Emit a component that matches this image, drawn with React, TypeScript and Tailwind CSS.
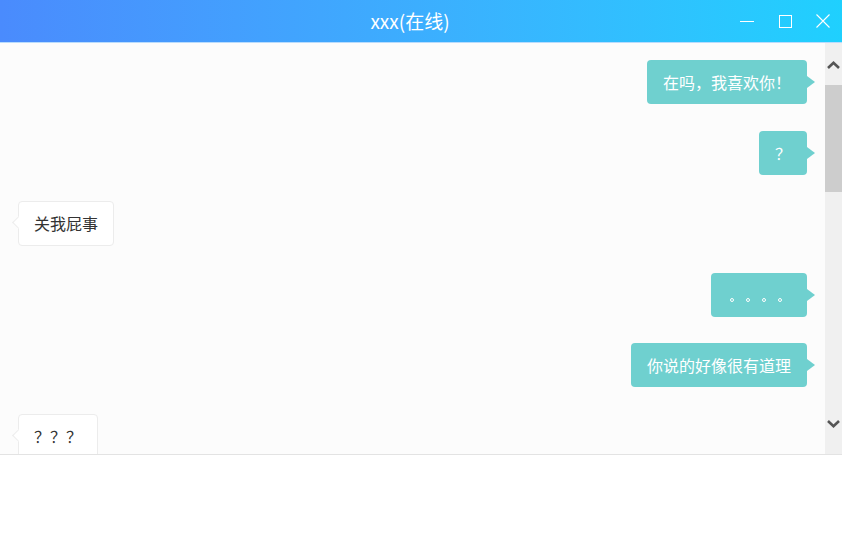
import React from "react";

type Msg = { me: boolean; text: string };

const messages: Msg[] = [
  { me: true, text: "在吗，我喜欢你！" },
  { me: true, text: "？" },
  { me: false, text: "关我屁事" },
  { me: true, text: "dots" },
  { me: true, text: "你说的好像很有道理" },
  { me: false, text: "？？？" },
];

const Dots = () => (
  <span className="flex h-full items-center">
    {[0, 1, 2, 3].map((i) => (
      <span key={i} className="flex w-[16px] items-center pl-[3px] pt-[10px]">
        <span className="block h-[4px] w-[4px] rounded-full border border-white" />
      </span>
    ))}
  </span>
);

const Bubble = ({ me, text }: Msg) => {
  if (me) {
    return (
      <div className="flex justify-end">
        <div className="relative h-[44px] rounded-[4px] bg-[#6fd0cf] px-[16px] text-[16px] leading-[44px] text-white">
          {text === "dots" ? <Dots /> : text}
          <span className="absolute right-[-8px] top-[16px] h-0 w-0 border-y-[6px] border-l-[8px] border-y-transparent border-l-[#6fd0cf]" />
        </div>
      </div>
    );
  }
  return (
    <div className="flex justify-start">
      <div className="relative h-[45px] rounded-[4px] border border-[#ececec] bg-white px-[15px] text-[16px] leading-[43px] text-[#333]">
        {text}
        <span className="absolute left-[-5px] top-[16px] h-[9px] w-[9px] rotate-45 border-b border-l border-[#ececec] bg-white" />
      </div>
    </div>
  );
};

export default function App() {
  return (
    <div
      className="flex h-[554px] w-[842px] flex-col overflow-hidden bg-white"
      style={{ fontFamily: '"Noto Sans CJK SC", "Noto Sans", sans-serif' }}
    >
      <header className="relative flex h-[42px] items-center justify-center bg-gradient-to-r from-[#4a8bfd] to-[#1fd0fe] pr-[22px] text-[19px] text-white">
        <span>xxx(在线)</span>
        <div className="absolute right-0 top-0 flex h-full items-center">
          <div className="flex h-full w-[38px] items-center justify-center">
            <span className="block h-px w-[14px] bg-white" />
          </div>
          <div className="flex h-full w-[38px] items-center justify-center">
            <span className="block h-[13px] w-[13px] border border-white" />
          </div>
          <div className="flex h-full w-[38px] items-center justify-center">
            <svg width="14" height="14" viewBox="0 0 14 14" fill="none" stroke="white" strokeWidth="1.1">
              <path d="M0.5 0.5L13.5 13.5M13.5 0.5L0.5 13.5" />
            </svg>
          </div>
        </div>
      </header>
      <div className="h-px bg-[#b9dcfd]" />
      <div className="flex h-[411px] bg-[#fcfcfc]">
        <div className="flex flex-1 flex-col gap-[26.6px] overflow-hidden px-[18px] pt-[17px]">
          {messages.map((m, i) => (
            <Bubble key={i} {...m} />
          ))}
        </div>
        <div className="flex w-[17px] flex-col bg-[#f0f0f0]">
          <div className="flex h-[42px] items-center justify-center pt-[2px]">
            <svg width="13" height="8" viewBox="0 0 13 8" fill="none" stroke="#555" strokeWidth="2.6">
              <path d="M1 7L6.5 1.8L12 7" />
            </svg>
          </div>
          <div className="h-[107px] bg-[#cdcdcd]" />
          <div className="flex-1" />
          <div className="flex h-[42px] items-center justify-center pb-[18px]">
            <svg width="13" height="8" viewBox="0 0 13 8" fill="none" stroke="#555" strokeWidth="2.6">
              <path d="M1 1L6.5 6.2L12 1" />
            </svg>
          </div>
        </div>
      </div>
      <div className="flex-1 border-t border-[#e3e3e3] bg-white" />
    </div>
  );
}
